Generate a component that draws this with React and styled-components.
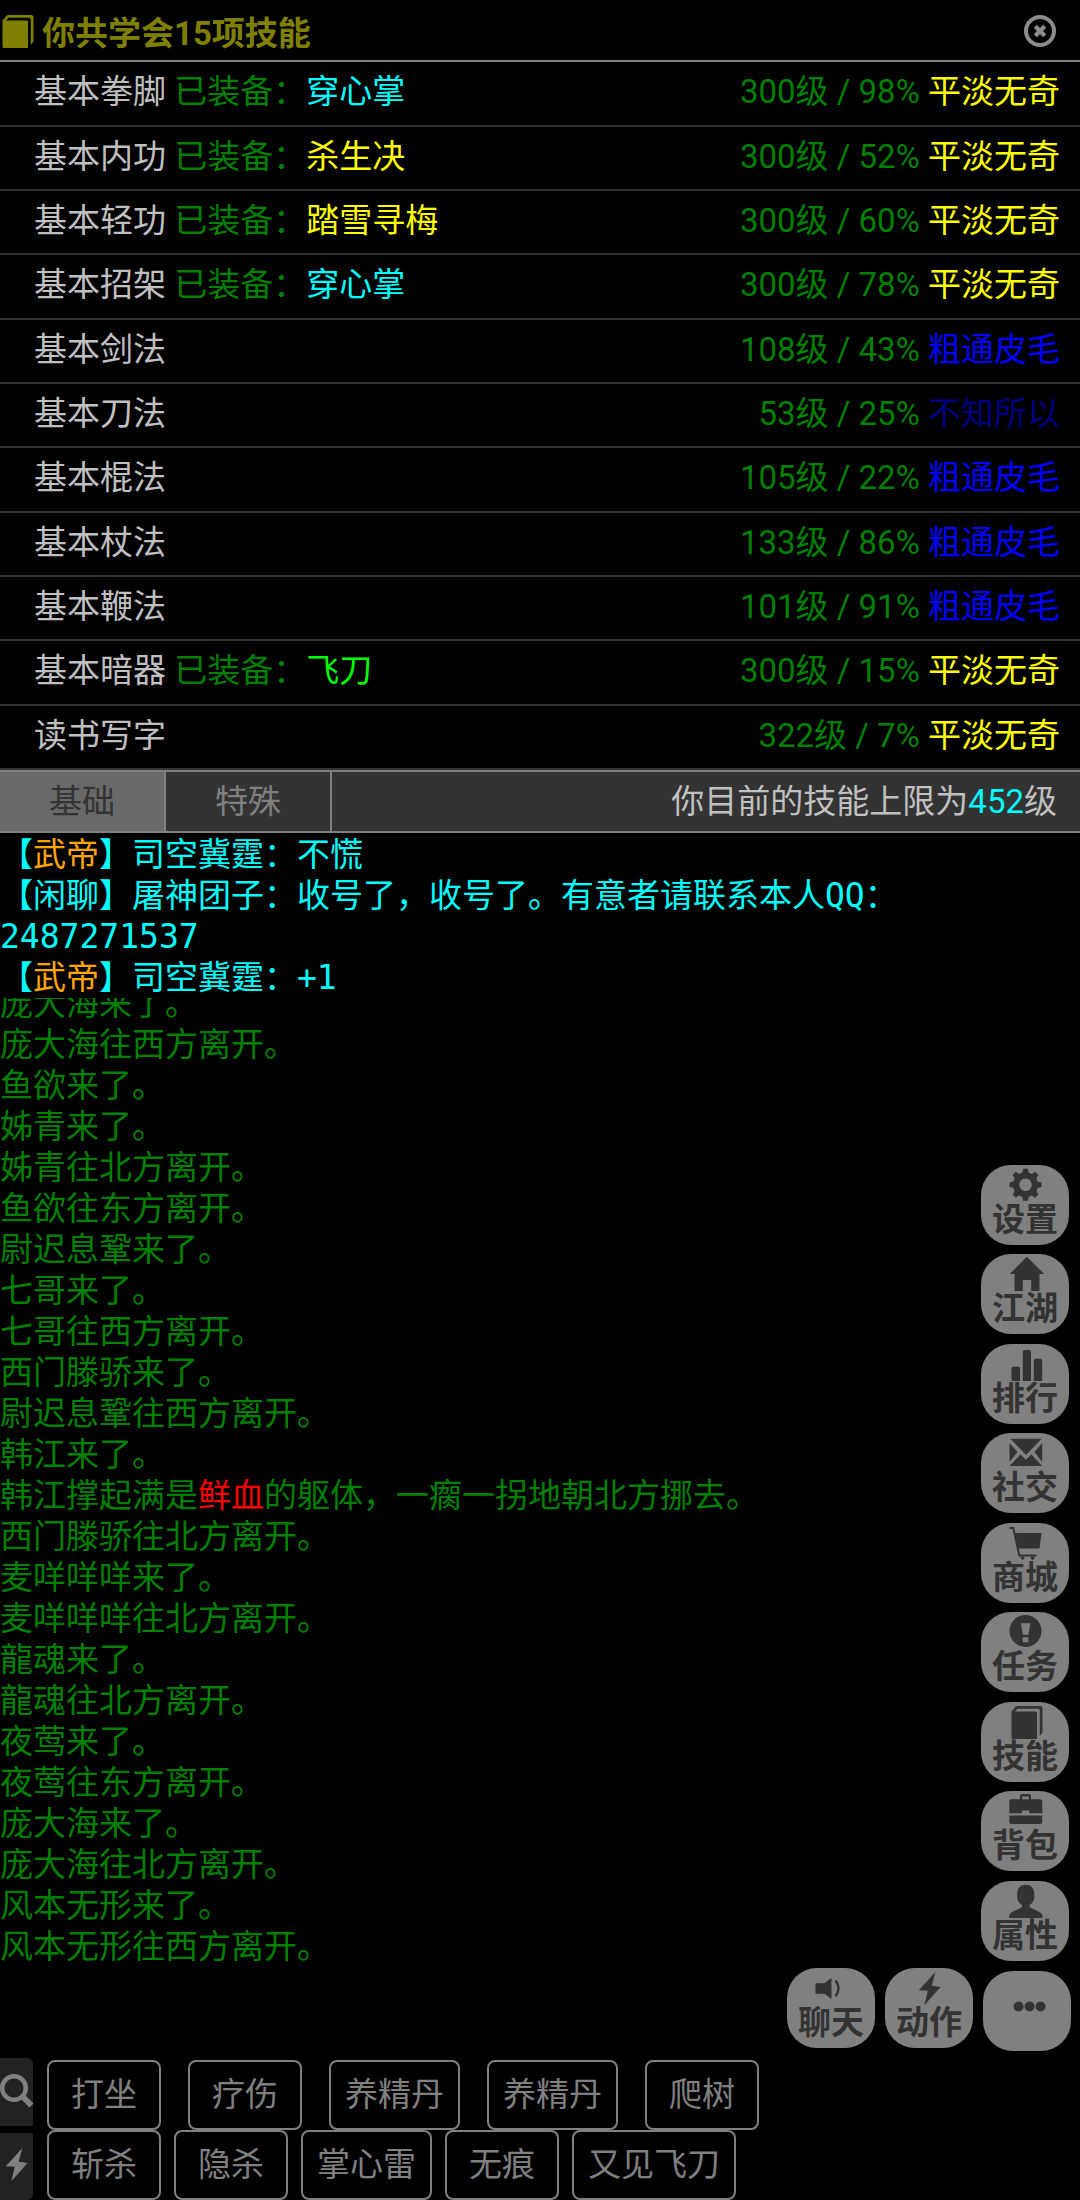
import React, {useState} from 'react';
import styled, {createGlobalStyle, ThemeProvider} from 'styled-components';

const theme = {
    colors: {
        line: '#808080',
        dim: '#333333',
        text: '#c0c0c0',
        green: '#008000',
        cyan: '#00ffff',
        yellow: '#ffff00',
        lime: '#00ff00',
        blue: '#0000ff',
        navy: '#000080',
        orange: '#ffa500',
        red: '#ff0000',
        olive: '#808000'
    },
    fonts: {
        ui: `Roboto, "Noto Sans CJK SC", sans-serif`,
        log: `"DejaVu Sans Mono", "Noto Sans CJK SC", monospace`
    }
};

const GlobalStyle = createGlobalStyle`
*{
    box-sizing:border-box;
}
body{
    margin:0;
    background:#000;
}
button{
    font:inherit;
    cursor:pointer;
    margin:0;
}
svg{
    display:block;
    overflow:visible;
}
`

const Page = styled.div`
position:relative;
display:flex;
flex-direction:column;
height:100vh;
overflow:hidden;
background:#000;
color:${props=>props.theme.colors.text};
font-family:${props=>props.theme.fonts.ui};
font-size:33px;
line-height:41px;
`

const Header = styled.header`
display:flex;
align-items:center;
flex:none;
height:62px;
padding:3px 24px 0 0;
border-bottom:2px solid ${props=>props.theme.colors.line};
color:${props=>props.theme.colors.olive};
h1{
    flex:1;
    margin:0 0 0 9px;
    padding-top:4px;
    font-size:33px;
    font-weight:bold;
}
`

const CloseButton = styled.button`
padding:0;
border:0;
background:none;
color:#8c8c8c;
`

const SkillList = styled.ul`
flex:none;
list-style:none;
margin:0;
padding:0;
`

const SkillRow = styled.li`
display:flex;
justify-content:space-between;
height:64px;
padding:9px 20px 0 34px;
border-bottom:2px solid ${props=>props.theme.colors.dim};
&:nth-child(3n+1){
    height:65px;
}
`

const Tint = styled.span`
color:${props=>props.theme.colors[props.$color]};
`

const TabBar = styled.div`
display:flex;
flex:none;
height:63px;
border-top:2px solid ${props=>props.theme.colors.line};
border-bottom:2px solid ${props=>props.theme.colors.line};
background:${props=>props.theme.colors.dim};
p{
    flex:1;
    margin:0;
    padding:9px 23px 0 0;
    text-align:right;
}
`

const Tab = styled.button`
width:166px;
padding:0 0 1px;
border:0;
border-right:2px solid ${props=>props.theme.colors.line};
background:${props=>props.$active ? '#696969' : 'transparent'};
color:${props=>props.$active ? props.theme.colors.dim : props.theme.colors.line};
`

const Chat = styled.div`
flex:none;
padding-top:1px;
color:${props=>props.theme.colors.cyan};
font-family:${props=>props.theme.fonts.log};
p{
    margin:0;
}
`

const Log = styled.div`
display:flex;
flex-direction:column;
justify-content:flex-end;
flex:1;
min-height:0;
margin-bottom:91px;
overflow:hidden;
color:${props=>props.theme.colors.green};
font-family:${props=>props.theme.fonts.log};
p{
    flex:none;
    margin:0;
}
`

const Footer = styled.footer`
display:flex;
flex:none;
`

const SideTools = styled.div`
display:flex;
flex-direction:column;
gap:7px;
width:33px;
margin-right:14px;
`

const SideButton = styled.button`
flex:1;
padding:0 0 3px;
border:0;
border-radius:${props=>props.$last ? '0 0 6px 0' : '0 6px 0 0'};
background:#222;
color:${props=>props.theme.colors.line};
`

const ActionRows = styled.div`
flex:1;
padding-top:2px;
`

const ActionRow = styled.div`
display:flex;
gap:${props=>props.$gap}px;
`

const ActionButton = styled.button`
min-width:114px;
height:70px;
padding:0 14px 2px;
border:2px solid ${props=>props.theme.colors.line};
border-radius:8px;
background:none;
color:${props=>props.theme.colors.line};
`

const FloatMenu = styled.nav`
position:absolute;
right:9px;
bottom:149px;
display:flex;
flex-direction:column;
align-items:flex-end;
gap:7px;
`

const FloatColumn = styled.div`
display:flex;
flex-direction:column;
gap:9px;
margin-right:2px;
button:nth-child(2n){
    margin-bottom:1px;
}
`

const FloatRow = styled.div`
display:flex;
align-items:flex-end;
gap:10px;
`

const FloatPair = styled.div`
display:flex;
gap:10px;
margin-bottom:3px;
`

const FloatButton = styled.button`
display:flex;
flex-direction:column;
align-items:center;
width:88px;
height:80px;
padding:4px 0 0;
border:0;
border-radius:30px;
background:${props=>props.theme.colors.line};
color:${props=>props.theme.colors.dim};
font-weight:bold;
line-height:35px;
`

const MoreButton = styled(FloatButton)`
justify-content:center;
padding:0 0 10px;
`

const Icon = ({children}) => (
    <svg width="33" height="33" viewBox="0 0 33 33" fill="currentColor" aria-hidden="true">{children}</svg>
)

const icons = {
    book: <path d="M2.5 5.5L6.5 .8Q7.2 0 8.5 0H31Q33.5 0 33.5 2.5V26.5L30.8 30V4.5Q30.8 2.8 29 2.8H8.5L6 5.5H26.5Q28 5.5 28 7V33H4Q2.5 33 2.5 31.5Z"/>,
    gear: <g>
        <circle cx="16.5" cy="15.7" r="9.4" fill="none" stroke="currentColor" strokeWidth="6.2"/>
        {[0, 45, 90, 135, 180, 225, 270, 315].map(deg => (
            <path key={deg} d="M13 5L14.2 -.3H18.8L20 5Z" transform={`rotate(${deg} 16.5 15.7)`}/>
        ))}
    </g>,
    house: <path d="M17.8 -1.3L35.2 16H30.5V33H22.2V22H13.8V33H5.5V16H.8Z"/>,
    chart: <path d="M2.5 33V20.7Q2.5 18.7 4.5 18.7H9Q11 18.7 11 20.7V33ZM13.8 33V4Q13.8 2 15.8 2H20Q22 2 22 4V33ZM24.8 33V12.7Q24.8 10.7 26.8 10.7H31.2Q33.2 10.7 33.2 12.7V33Z"/>,
    mail: <path d="M1.5 1.7H32.5L17 18ZM.5 6V25L8.5 15ZM33.2 6V25L25.5 15ZM.5 29L11.5 17.5 16.9 22.8 22.3 17.5 33.2 29Z"/>,
    cart: <g>
        <path d="M6 6H32.5L30.5 21.6H9.5Z"/>
        <path d="M.5 1H4.3L10.3 28.5H27.5" fill="none" stroke="currentColor" strokeWidth="2"/>
        <path d="M11.8 29.5H15.2V31.5L14 32.7H13L11.8 31.5ZM21.8 29.5H25.2V31.5L24 32.7H23L21.8 31.5Z"/>
    </g>,
    alert: <path fillRule="evenodd" d="M16.5 -1A16 16 0 1 1 16.5 31A16 16 0 1 1 16.5 -1ZM11.9 7.3L13.9 18.7H19.4L21.4 7.3ZM13.8 21.3V26.3H19.3V21.3Z"/>,
    briefcase: <path fillRule="evenodd" d="M11 4.3V1Q11 -1 13 -1H20Q22 -1 22 1V4.3H31.3Q33.3 4.3 33.3 6.3V18.3H20.2V15.5H12.8V18.3H.3V6.3Q.3 4.3 2.3 4.3ZM13.2 4.3H19.8V1.5H13.2ZM.3 20.6H33.3V27Q33.3 29 31.3 29H2.3Q.3 29 .3 27Z"/>,
    user: <path d="M16.7 -.3C21.8 -.3 25.2 3 25.2 8V12C25.2 16 23.5 18.2 20.6 20V22.2L29.5 26.5Q33.5 28.7 33.5 31V33H.2V31Q.2 28.7 4.2 26.5L13 22.2V20C10 18.2 8.2 16 8.2 12V8C8.2 3 11.7 -.3 16.7 -.3Z"/>,
    sound: <g>
        <path d="M.5 11.3H9.5L16.5 5.7V27L9.5 21.8H.5Z"/>
        <path d="M20.5 8.5Q26.5 16.3 20.5 24.2" fill="none" stroke="currentColor" strokeWidth="2.4"/>
    </g>,
    bolt: <path d="M22.2 .2L5.8 18.2 14.8 18.8 11.3 33.2 27.6 15 18.8 13.8Z"/>,
    more: <g>
        <circle cx="7.6" cy="16.5" r="5"/>
        <circle cx="18.6" cy="16.5" r="5"/>
        <circle cx="29.6" cy="16.5" r="5"/>
    </g>,
    close: <g fill="none" stroke="currentColor">
        <circle cx="17" cy="16" r="14" strokeWidth="4"/>
        <path d="M12.3 11.3L21.7 20.7M21.7 11.3L12.3 20.7" strokeWidth="4.4"/>
    </g>,
    search: <g fill="none" stroke="currentColor">
        <circle cx="14" cy="14" r="11.8" strokeWidth="4.4"/>
        <path d="M22 22L31.5 31.5" strokeWidth="5.6"/>
    </g>
};

const skills = [
    {name: '基本拳脚', equip: '穿心掌', equipColor: 'cyan', level: '300级 / 98%', rank: '平淡无奇', rankColor: 'yellow'},
    {name: '基本内功', equip: '杀生决', equipColor: 'yellow', level: '300级 / 52%', rank: '平淡无奇', rankColor: 'yellow'},
    {name: '基本轻功', equip: '踏雪寻梅', equipColor: 'yellow', level: '300级 / 60%', rank: '平淡无奇', rankColor: 'yellow'},
    {name: '基本招架', equip: '穿心掌', equipColor: 'cyan', level: '300级 / 78%', rank: '平淡无奇', rankColor: 'yellow'},
    {name: '基本剑法', level: '108级 / 43%', rank: '粗通皮毛', rankColor: 'blue'},
    {name: '基本刀法', level: '53级 / 25%', rank: '不知所以', rankColor: 'navy'},
    {name: '基本棍法', level: '105级 / 22%', rank: '粗通皮毛', rankColor: 'blue'},
    {name: '基本杖法', level: '133级 / 86%', rank: '粗通皮毛', rankColor: 'blue'},
    {name: '基本鞭法', level: '101级 / 91%', rank: '粗通皮毛', rankColor: 'blue'},
    {name: '基本暗器', equip: '飞刀', equipColor: 'lime', level: '300级 / 15%', rank: '平淡无奇', rankColor: 'yellow'},
    {name: '读书写字', level: '322级 / 7%', rank: '平淡无奇', rankColor: 'yellow'}
];

const logLines = [
    '庞大海来了。',
    '庞大海往西方离开。',
    '鱼欲来了。',
    '姊青来了。',
    '姊青往北方离开。',
    '鱼欲往东方离开。',
    '尉迟息鞏来了。',
    '七哥来了。',
    '七哥往西方离开。',
    '西门滕骄来了。',
    '尉迟息鞏往西方离开。',
    '韩江来了。',
    <>韩江撑起满是<Tint $color="red">鲜血</Tint>的躯体，一瘸一拐地朝北方挪去。</>,
    '西门滕骄往北方离开。',
    '麦咩咩咩来了。',
    '麦咩咩咩往北方离开。',
    '龍魂来了。',
    '龍魂往北方离开。',
    '夜莺来了。',
    '夜莺往东方离开。',
    '庞大海来了。',
    '庞大海往北方离开。',
    '风本无形来了。',
    '风本无形往西方离开。'
];

const menu = [
    ['gear', '设置'],
    ['house', '江湖'],
    ['chart', '排行'],
    ['mail', '社交'],
    ['cart', '商城'],
    ['alert', '任务'],
    ['book', '技能'],
    ['briefcase', '背包'],
    ['user', '属性']
];

const App = () => {
    const [tab, setTab] = useState('基础');
    return (
        <ThemeProvider theme={theme}>
            <GlobalStyle/>
            <Page lang="zh-CN">
                <Header>
                    <Icon>{icons.book}</Icon>
                    <h1>你共学会15项技能</h1>
                    <CloseButton aria-label="关闭"><Icon>{icons.close}</Icon></CloseButton>
                </Header>
                <SkillList>
                    {skills.map(skill => (
                        <SkillRow key={skill.name}>
                            <span>
                                {skill.name}
                                {skill.equip && <> <Tint $color="green">已装备：</Tint><Tint $color={skill.equipColor}>{skill.equip}</Tint></>}
                            </span>
                            <span><Tint $color="green">{skill.level}</Tint> <Tint $color={skill.rankColor}>{skill.rank}</Tint></span>
                        </SkillRow>
                    ))}
                </SkillList>
                <TabBar>
                    {['基础', '特殊'].map(name => (
                        <Tab key={name} $active={tab === name} onClick={()=>setTab(name)}>{name}</Tab>
                    ))}
                    <p>你目前的技能上限为<Tint $color="cyan">452</Tint>级</p>
                </TabBar>
                <Chat>
                    <p>【<Tint $color="orange">武帝</Tint>】司空冀霆：不慌</p>
                    <p>【闲聊】屠神团子：收号了，收号了。有意者请联系本人QQ：<br/>2487271537</p>
                    <p>【<Tint $color="orange">武帝</Tint>】司空冀霆：+1</p>
                </Chat>
                <Log>
                    {logLines.map((line, i) => <p key={i}>{line}</p>)}
                </Log>
                <Footer>
                    <SideTools>
                        <SideButton aria-label="搜索"><Icon>{icons.search}</Icon></SideButton>
                        <SideButton $last aria-label="快捷"><Icon>{icons.bolt}</Icon></SideButton>
                    </SideTools>
                    <ActionRows>
                        <ActionRow $gap={27}>
                            {['打坐', '疗伤', '养精丹', '养精丹', '爬树'].map((name, i) => <ActionButton key={i}>{name}</ActionButton>)}
                        </ActionRow>
                        <ActionRow $gap={13}>
                            {['斩杀', '隐杀', '掌心雷', '无痕', '又见飞刀'].map(name => <ActionButton key={name}>{name}</ActionButton>)}
                        </ActionRow>
                    </ActionRows>
                </Footer>
                <FloatMenu>
                    <FloatColumn>
                        {menu.map(([icon, name]) => (
                            <FloatButton key={name}><Icon>{icons[icon]}</Icon>{name}</FloatButton>
                        ))}
                    </FloatColumn>
                    <FloatRow>
                        <FloatPair>
                            <FloatButton><Icon>{icons.sound}</Icon>聊天</FloatButton>
                            <FloatButton><Icon>{icons.bolt}</Icon>动作</FloatButton>
                        </FloatPair>
                        <MoreButton aria-label="更多"><Icon>{icons.more}</Icon></MoreButton>
                    </FloatRow>
                </FloatMenu>
            </Page>
        </ThemeProvider>
    )
};
export default App
